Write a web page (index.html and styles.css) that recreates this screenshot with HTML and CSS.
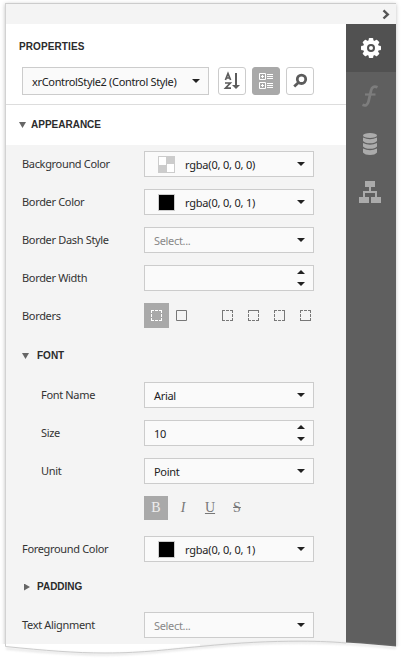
FILE: index.html
```html
<!DOCTYPE html>
<html lang="en">
<head>
<meta charset="utf-8">
<title>Properties</title>
<link rel="stylesheet" href="styles.css">
</head>
<body>
<div class="panel">
  <div class="topbar"><svg width="8" height="11" viewBox="0 0 8 11"><path d="M1.5 1.3 5.8 5.4 1.5 9.5" fill="none" stroke="#555" stroke-width="2.4"/></svg></div>
  <div class="main">
    <div class="content">
      <div class="head">
        <h1>PROPERTIES</h1>
        <div class="tools">
          <div class="field picker"><span>xrControlStyle2 (Control Style)</span><i class="down"></i></div>
          <div class="tool"><svg width="28" height="28"><g fill="none" stroke="#5c5c5c" stroke-width="1.7"><path d="M7.4 13 10 6.5 12.6 13M8.3 11h3.5"/><path d="M7 16h5.3L7.5 21.2H13"/></g><path d="M17 6h2v12h3l-4 4-4-4h3z" fill="#5c5c5c"/></svg></div>
          <div class="tool on"><svg width="28" height="28"><g fill="none" stroke="#fff"><path d="M7.500 6.500h6v6h-6zM7.500 15.500h6v6h-6zM15 7.500h6M15 9.500h6M15 11.500h6M15 16.500h6M15 18.500h6M15 20.500h6"/><path d="M9 9.500h3M10.500 8v3M9 18.500h3M10.500 17v3"/></g></svg></div>
          <div class="tool"><svg width="28" height="28"><circle cx="15.500" cy="12.300" r="4.200" fill="none" stroke="#5c5c5c" stroke-width="2.800"/><path d="M12.500 15.500 8.200 19.500" stroke="#5c5c5c" stroke-width="2.800"/></svg></div>
        </div>
      </div>
      <div class="section"><i class="open"></i><h2>APPEARANCE</h2></div>
      <div class="rows">
        <div class="row"><label>Background Color</label><div class="field"><b class="swatch clear"></b><span class="rgba">rgba(0, 0, 0, 0)</span><i class="down"></i></div></div>
        <div class="row"><label>Border Color</label><div class="field"><b class="swatch"></b><span class="rgba">rgba(0, 0, 0, 1)</span><i class="down"></i></div></div>
        <div class="row"><label>Border Dash Style</label><div class="field"><span class="hint">Select...</span><i class="down"></i></div></div>
        <div class="row"><label>Border Width</label><div class="field"><div class="spin"><i class="up"></i><i class="down"></i></div></div></div>
        <div class="row"><label>Borders</label>
          <div class="borders">
            <div class="bbtn on"><svg width="11" height="11"><path class="dash" d="M0 .5h11M0 10.500h11M.5 0v11M10.500 0v11"/></svg></div>
            <div class="bbtn all"><svg width="11" height="11"><path d="M.5 .5h10v10h-10z"/></svg></div>
            <div class="bbtn"><svg width="11" height="11"><path class="dash" d="M0 .5h11M0 10.500h11M10.500 0v11"/><path d="M.5 0v11"/></svg></div>
            <div class="bbtn"><svg width="11" height="11"><path class="dash" d="M.5 0v11M0 10.500h11M10.500 0v11"/><path d="M0 .5h11"/></svg></div>
            <div class="bbtn"><svg width="11" height="11"><path class="dash" d="M0 .5h11M0 10.500h11M.5 0v11"/><path d="M10.500 0v11"/></svg></div>
            <div class="bbtn"><svg width="11" height="11"><path class="dash" d="M0 .5h11M.5 0v11M10.500 0v11"/><path d="M0 10.500h11"/></svg></div>
          </div>
        </div>
        <div class="row group"><i class="open"></i><h2>FONT</h2></div>
        <div class="row sub"><label>Font Name</label><div class="field"><span>Arial</span><i class="down"></i></div></div>
        <div class="row sub"><label>Size</label><div class="field"><span>10</span><div class="spin"><i class="up"></i><i class="down"></i></div></div></div>
        <div class="row sub"><label>Unit</label><div class="field"><span>Point</span><i class="down"></i></div></div>
        <div class="row styles"><div class="sbtn on">B</div><div class="sbtn ital">I</div><div class="sbtn under">U</div><div class="sbtn strike">S</div></div>
        <div class="row"><label>Foreground Color</label><div class="field"><b class="swatch"></b><span class="rgba">rgba(0, 0, 0, 1)</span><i class="down"></i></div></div>
        <div class="row pad"><i class="closed"></i><h2>PADDING</h2></div>
        <div class="row"><label>Text Alignment</label><div class="field"><span class="hint">Select...</span><i class="down"></i></div></div>
      </div>
    </div>
    <div class="side">
      <div class="tab active"><svg width="22" height="22" viewBox="-11 -11 22 22"><g fill="#fff"><circle r="8"/><rect x="-2.300" y="-10" width="4.600" height="20" rx="1"/><rect x="-10" y="-2.300" width="20" height="4.600" rx="1"/><g transform="rotate(45)"><rect x="-2.300" y="-10" width="4.600" height="20" rx="1"/><rect x="-10" y="-2.300" width="20" height="4.600" rx="1"/></g></g><circle r="3" fill="none" stroke="#515151" stroke-width="2"/></svg></div>
      <div class="tab"><svg width="18" height="22"><path d="M16.500 2.300C13 .8 11 2 10.200 5L7.500 16.500C6.700 20 4.500 21 1.500 19.800" fill="none" stroke="#7d7d7d" stroke-width="2.800"/><path d="M4 9.500h10.500" stroke="#7d7d7d" stroke-width="2.200"/></svg></div>
      <div class="tab"><svg width="14" height="22" fill="#ababab"><ellipse cx="7" cy="2.500" rx="7" ry="2.500"/><path d="M0 4.500Q7 8 14 4.500V8Q12 10.300 7 10.300T0 8z"/><path d="M0 10Q7 13.500 14 10V13.500Q12 15.800 7 15.800T0 13.500z"/><path d="M0 15.500Q7 19 14 15.500V19.500Q12 22 7 22T0 19.500z"/></svg></div>
      <div class="tab"><svg width="22" height="22"><path fill="#ababab" d="M6 0h10v6H6zM0 16h10v6H0zM12 16h10v6H12z"/><path d="M11 6v5M5 16v-5h12v5" fill="none" stroke="#ababab" stroke-width="2"/></svg></div>
    </div>
  </div>
</div>
<svg class="torn" width="401" height="20" viewBox="0 640 401 20">
  <path fill="#fff" d="M0 644H200L200 646.500C240 642.500 270 641.200 300 641.200C335 641.200 365 643.500 396 646.500H401V660H0z"/>
  <path class="fade" d="M6 648.500C45 652 75 654.500 105 654.500C145 654.500 170 650 200 647.500C240 643.500 270 642.500 300 642.500C335 642.500 365 644.500 396 648"/>
  <path class="edge" d="M5.500 644V646.500C45 650.500 75 653 105 653C145 653 170 649 200 646.500C240 642.500 270 641.200 300 641.200C320 641.200 335 642 346 643"/>
</svg>
</body>
</html>
```
FILE: styles.css
```css
* { box-sizing: border-box; }
body {
  margin: 0;
  width: 401px;
  height: 660px;
  overflow: hidden;
  position: relative;
  background: #fff;
  font: 11px/16px "Noto Sans", "Open Sans", sans-serif;
  letter-spacing: -.33px;
  color: #333;
}
svg { display: block; }
i, b { display: block; flex: none; }
.panel {
  margin: 3px 5px 0;
  width: 391px;
  height: 644px;
  border-top: 1px solid #ccc;
  border-left: 1px solid #d2d2d2;
  box-shadow: 0 1px 4px rgba(0, 0, 0, .25);
  display: flex;
  flex-direction: column;
}
.topbar {
  height: 20px;
  background: #f4f4f4;
  display: flex;
  justify-content: flex-end;
  align-items: center;
  padding: 0 6px 0 0;
}
.main { flex: 1; display: flex; }
.content { width: 340px; background: #f4f4f4; }
.head {
  height: 81px;
  padding: 16px 13px 0;
  background: #fff;
  border-bottom: 1px solid #ddd;
}
h1, h2 {
  margin: 0;
  font: bold 10px/14px "Liberation Sans", sans-serif;
  letter-spacing: 0;
  color: #2b2b2b;
}
h1 { letter-spacing: .1px; }
.tools { display: flex; margin: 13px 0 0 3px; }
.tool {
  width: 28px;
  height: 28px;
  margin-left: 6px;
  border: 1px solid #ccc;
  border-radius: 3px;
}
.picker + .tool { margin-left: 9px; }
.tool svg { margin: -1px; }
.tool.on { background: #a9a9a9; border-color: #a9a9a9; }
.field {
  width: 170px;
  height: 26px;
  padding: 1px 8px 0 9px;
  border: 1px solid #ccc;
  background: #fafafa;
  display: flex;
  align-items: center;
  white-space: nowrap;
  color: #222;
}
.field.picker { width: 187px; height: 28px; }
.rgba { letter-spacing: -.2px; }
.down, .up {
  width: 8px;
  margin-left: auto;
  border: 4px solid transparent;
  border-bottom: 0;
  border-top-color: #222;
  position: relative;
  top: -1px;
}
.up { border-top: 0; border-bottom: 4px solid #222; }
.spin {
  height: 16px;
  margin-left: auto;
  display: flex;
  flex-direction: column;
  justify-content: space-between;
}
.section {
  height: 40px;
  padding-left: 13px;
  display: flex;
  align-items: center;
  background: #fff;
}
.open, .closed {
  width: 7px;
  height: 6px;
  background: #666;
  clip-path: polygon(0 0, 100% 0, 50% 100%);
}
.section h2 { margin-left: 5px; }
.rows {
  display: flex;
  flex-direction: column;
  gap: 12px;
  padding: 6px 0 0 16px;
}
.row { height: 26px; display: flex; align-items: center; }
.row label { width: 122px; }
.sub { padding-left: 19px; }
.sub label { width: 103px; }
.group { height: 29px; padding-top: 1px; }
.group h2, .pad h2 { margin-left: 8px; }
.closed {
  width: 6px;
  height: 7px;
  margin: 0 1px 0 2px;
  clip-path: polygon(0 0, 100% 50%, 0 100%);
}
.pad h2 { margin-left: 6px; }
.swatch {
  width: 17px;
  height: 17px;
  margin: 0 10px 0 4px;
  border: 1px solid #ccc;
  background: #000;
}
.swatch.clear { background: conic-gradient(#ccc 25%, #fff 0 50%, #ccc 0 75%, #fff 0); }
.hint { color: #888; }
.borders { display: flex; gap: 1px; margin-bottom: 1px; }
.bbtn {
  width: 25px;
  height: 25px;
  display: grid;
  place-items: center;
}
.bbtn.on, .sbtn.on { background: #a9a9a9; color: #eee; }
.bbtn.all { margin: 0 20px 0 -1px; }
.bbtn path { fill: none; stroke: #777; }
.bbtn.on path { stroke: #fff; }
.bbtn .dash { stroke-dasharray: 3 1; }
.styles { height: 28px; align-items: flex-start; padding-left: 122px; gap: 3px; }
.sbtn {
  width: 24px;
  height: 24px;
  font: 14px/24px "Liberation Serif", serif;
  letter-spacing: 0;
  text-align: center;
  color: #777;
}
.ital { font-style: italic; }
.under { text-decoration: underline; }
.strike { text-decoration: line-through; }
.side { width: 50px; padding-right: 2px; background: #5f5f5f; }
.tab { height: 48px; display: grid; place-items: center; }
.tab.active { margin-right: -2px; background: #515151; }
.torn { position: absolute; left: 0; top: 640px; }
.torn .edge { fill: none; stroke: #ccc; }
.torn .fade { fill: none; stroke: #bbb; stroke-width: 2; opacity: .4; filter: blur(1px); }
```
